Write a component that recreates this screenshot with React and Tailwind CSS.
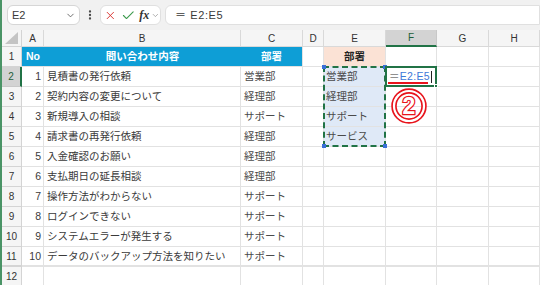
import { X, Check, ChevronDown, EllipsisVertical } from "lucide-react";

const rows = [
    [1, "見積書の発行依頼", "営業部"],
    [2, "契約内容の変更について", "経理部"],
    [3, "新規導入の相談", "サポート"],
    [4, "請求書の再発行依頼", "経理部"],
    [5, "入金確認のお願い", "経理部"],
    [6, "支払期日の延長相談", "経理部"],
    [7, "操作方法がわからない", "サポート"],
    [8, "ログインできない", "サポート"],
    [9, "システムエラーが発生する", "サポート"],
    [10, "データのバックアップ方法を知りたい", "サポート"],
];

const listE = ["営業部", "経理部", "サポート", "サービス"];
const letters = ["A", "B", "C", "D", "E", "F", "G", "H"];

const cell = "h-full border-r border-b border-[#e2e2e2] overflow-hidden whitespace-nowrap leading-[19px]";
const rowHead = "h-full flex items-center justify-center border-r border-b border-[#d4d4d4] bg-[#f5f5f5] text-[10px] font-medium text-[#333]";

function Handle({ className }) {
    return <span className={`absolute w-[4px] h-[4px] bg-[#3a6fd8] ${className}`} />;
}

export default function App() {
    return (
        <div className="w-[540px] h-[285px] overflow-hidden bg-white border-l-2 border-[#4a9466] font-['Liberation_Sans','Noto_Sans_CJK_JP',sans-serif] text-[#3a3a3a]">
            {/* Formula bar */}
            <div className="h-[30px] flex items-start gap-[4px] pt-[5px] pl-[5px] bg-[#f1f1f1]">
                <div className="w-[73px] h-[20px] flex items-center justify-between bg-white border border-[#d6d6d6] rounded-md pl-[4px] pr-[3px] text-[11px]">
                    <span>E2</span>
                    <ChevronDown size={11} strokeWidth={1.8} className="text-[#555]" />
                </div>
                <div className="h-[20px] w-[12px] flex items-center justify-center">
                    <EllipsisVertical size={12} strokeWidth={2.6} className="text-[#444]" />
                </div>
                <div className="w-[61px] h-[20px] flex items-center bg-white border border-[#e0e0e0] rounded-md pl-[3px] gap-[4px]">
                    <X size={13} strokeWidth={1.8} className="text-[#d9322e]" />
                    <Check size={15} strokeWidth={1.8} className="text-[#3c9a4c]" />
                    <span className="font-['Liberation_Serif',serif] italic font-bold text-[12px] text-[#333] leading-none">fx</span>
                    <ChevronDown size={9} strokeWidth={1.8} className="text-[#888] -ml-[2px]" />
                </div>
                <div className="flex-1 h-[20px] flex items-center bg-white border border-[#e0e0e0] rounded-l-md pl-[9px] text-[11px] tracking-[0.6px]">
                    ＝ E2:E5
                </div>
            </div>

            {/* Sheet grid */}
            <div className="grid grid-cols-[20px_22px_197px_62px_21px_62px_51px_52px_1fr] grid-rows-[17px_repeat(12,20px)] text-[10.5px]">
                {/* column header */}
                <div className="h-full relative border-r border-b border-[#d4d4d4] bg-[#f5f5f5]">
                    <svg width="16" height="13" className="absolute right-[2px] bottom-[1px]">
                        <polygon points="15,0 15,12 2,12" fill="#c4c4c4" />
                    </svg>
                </div>
                {letters.map((l) =>
                    l === "F" ? (
                        <div key={l} className="h-full flex items-center justify-center bg-[#d3d3d3] border-r border-[#c8c8c8] border-b-2 border-b-[#217346] text-[10px] text-[#1e5e3a]">
                            {l}
                        </div>
                    ) : (
                        <div key={l} className="h-full flex items-center justify-center bg-[#f5f5f5] border-r border-b border-[#d9d9d9] text-[10px] text-[#333]">
                            {l}
                        </div>
                    )
                )}

                {/* row 1 */}
                <div className={rowHead}>1</div>
                <div className="h-full bg-[#0e9ed6] border-b border-[#e2e2e2] pl-[4px] text-white font-bold leading-[19px]">No</div>
                <div className="h-full bg-[#0e9ed6] border-b border-[#e2e2e2] text-center text-white font-bold leading-[19px]">問い合わせ内容</div>
                <div className="h-full bg-[#0e9ed6] border-r border-b border-[#e2e2e2] text-center text-white font-bold leading-[19px]">部署</div>
                <div className={cell} />
                <div className={`${cell} bg-[#fbe2d5] text-center font-bold text-[#222]`}>部署</div>
                <div className={cell} />
                <div className={cell} />
                <div className={cell} />

                {rows.map(([n, title, dept], i) => {
                    const r = i + 2;
                    const active = r === 2;
                    const eVal = listE[i];
                    const last = r === 11 ? "border-b-2" : "";
                    return [
                        <div
                            key={`h${r}`}
                            className={
                                active
                                    ? "h-full flex items-center justify-center bg-[#d3d3d3] border-b border-[#c8c8c8] border-r-2 border-r-[#217346] text-[10px] font-medium text-[#1e5e3a]"
                                    : `${rowHead} ${last}`
                            }
                        >
                            {r}
                        </div>,
                        <div key={`a${r}`} className={`${cell} text-right pr-[2px] ${last}`}>{n}</div>,
                        <div key={`b${r}`} className={`${cell} pl-[3px] ${last}`}>{title}</div>,
                        <div key={`c${r}`} className={`${cell} pl-[3px] text-[#4a4a4a] ${last}`}>{dept}</div>,
                        <div key={`d${r}`} className={`${cell} ${last}`} />,
                        <div
                            key={`e${r}`}
                            className={`${cell} pl-[2px] ${eVal ? "bg-[#dfe9f7] text-[#4a4a4a]" : ""} ${r === 2 ? "relative overflow-visible" : ""} ${last}`}
                        >
                            {eVal}
                            {r === 2 && (
                                <div className="absolute -left-px -top-px w-[63px] h-[81px] border-2 border-dashed border-[#217346] z-10 pointer-events-none">
                                    <Handle className="-left-[3px] -top-[3px]" />
                                    <Handle className="-right-[3px] -top-[3px]" />
                                    <Handle className="-left-[3px] -bottom-[3px]" />
                                    <Handle className="-right-[3px] -bottom-[3px]" />
                                </div>
                            )}
                        </div>,
                        <div key={`f${r}`} className={`${cell} ${r === 2 ? "relative overflow-visible" : ""} ${last}`}>
                            {r === 2 && (
                                <>
                                    <div className="absolute -left-px -top-px w-[52px] h-[21px] border-2 border-[#217346] z-10">
                                        <span className="absolute -right-[3px] -bottom-[3px] w-[4px] h-[4px] bg-[#217346] border border-white" />
                                    </div>
                                    <div className="relative z-20 pl-[3px] flex items-center h-[19px] tracking-[0.3px]">
                                        <span className="text-[#777]">＝</span>
                                        <span className="text-[#3d78d8]">E2:E5</span>
                                        <span className="w-px h-[12px] bg-[#222] ml-px" />
                                    </div>
                                    <span className="absolute left-[2px] top-[15px] w-[40px] h-[2px] bg-[#e8141c] z-20" />
                                    <svg width="38" height="38" viewBox="0 0 38 38" className="absolute left-[4px] top-[20px] z-20">
                                        <circle cx="19" cy="19" r="15" fill="none" stroke="#e8141c" strokeWidth="5.5" />
                                        <circle cx="19" cy="19" r="15" fill="none" stroke="#fff" strokeWidth="2.2" />
                                        <text
                                            x="19"
                                            y="27"
                                            textAnchor="middle"
                                            fontFamily="Liberation Sans, sans-serif"
                                            fontWeight="bold"
                                            fontSize="23"
                                            fill="#fff"
                                            stroke="#e8141c"
                                            strokeWidth="2.4"
                                            paintOrder="stroke"
                                        >
                                            2
                                        </text>
                                    </svg>
                                </>
                            )}
                        </div>,
                        <div key={`g${r}`} className={`${cell} ${last}`} />,
                        <div key={`x${r}`} className={`${cell} ${last}`} />,
                    ];
                })}

                {/* row 12 */}
                <div className={rowHead}>12</div>
                {letters.map((l) => (
                    <div key={`r12${l}`} className={cell} />
                ))}
            </div>
        </div>
    );
}
